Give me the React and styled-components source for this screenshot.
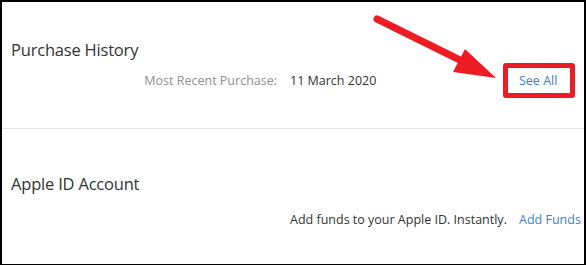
import React from 'react'
import styled, { createGlobalStyle } from 'styled-components'

const GlobalStyle = createGlobalStyle`
  html, body {
    margin: 0;
    padding: 0;
    background: #fff;
  }
  body {
    font-family: "Open Sans", "Noto Sans", "Liberation Sans", sans-serif;
  }
`;

const Frame = styled.div`
  position: relative;
  box-sizing: border-box;
  width: 586px;
  height: 265px;
  border: 2px solid #000;
  border-bottom-width: 1px;
  border-right-width: 2px;
  overflow: hidden;
  background: #fff;
`;

const Section = styled.section`
  padding: ${props => props.top}px 0 0 9px;
  height: ${props => props.height}px;
  box-sizing: border-box;
  border-bottom: ${props => (props.divided ? '1px solid #e3e3e3' : 'none')};
`;

const Heading = styled.h2`
  margin: 0;
  font-size: 16.5px;
  font-weight: 400;
  color: #333;
  letter-spacing: -0.2px;
  line-height: 22px;
`;

const Row = styled.div`
  display: grid;
  grid-template-columns: 266px 216px auto;
  column-gap: 13px;
  align-items: baseline;
  margin-top: ${props => props.gap}px;
  font-size: 12.5px;
  line-height: 18px;
`;

const Label = styled.span`
  text-align: right;
  color: #8f8f8f;
`;

const Value = styled.span`
  color: #333;
  white-space: nowrap;
`;

const Link = styled.a`
  position: relative;
  justify-self: start;
  color: #3a7fd5;
  text-decoration: none;
  white-space: nowrap;
  cursor: pointer;

  ${props =>
    props.highlighted &&
    `
    &::after {
      content: '';
      position: absolute;
      left: -16px;
      right: -18px;
      top: -9px;
      bottom: -8px;
      border: 5px solid #ed1c24;
      border-radius: 3px;
    }
  `}
`;

const Annotation = styled.svg`
  position: absolute;
  left: -2px;
  top: -2px;
  pointer-events: none;
`;

const Arrow = () => (
  <Annotation width="586" height="265" viewBox="0 0 586 265">
    <line
      x1="377"
      y1="19"
      x2="466"
      y2="63"
      stroke="#ed1c24"
      strokeWidth="7"
      strokeLinecap="round"
    />
    <polygon points="453,72 465,49 496,78" fill="#ed1c24" />
  </Annotation>
);

const App = () => {
  return (
    <>
      <GlobalStyle />
      <Frame>
        <Section top={37} height={127} divided>
          <Heading>Purchase History</Heading>
          <Row gap={11}>
            <Label>Most Recent Purchase:</Label>
            <Value>11 March 2020</Value>
            <Link highlighted>See All</Link>
          </Row>
        </Section>
        <Section top={44} height={135}>
          <Heading>Apple ID Account</Heading>
          <Row gap={16}>
            <span />
            <Value>Add funds to your Apple ID. Instantly.</Value>
            <Link>Add Funds</Link>
          </Row>
        </Section>
        <Arrow />
      </Frame>
    </>
  );
};

export default App
